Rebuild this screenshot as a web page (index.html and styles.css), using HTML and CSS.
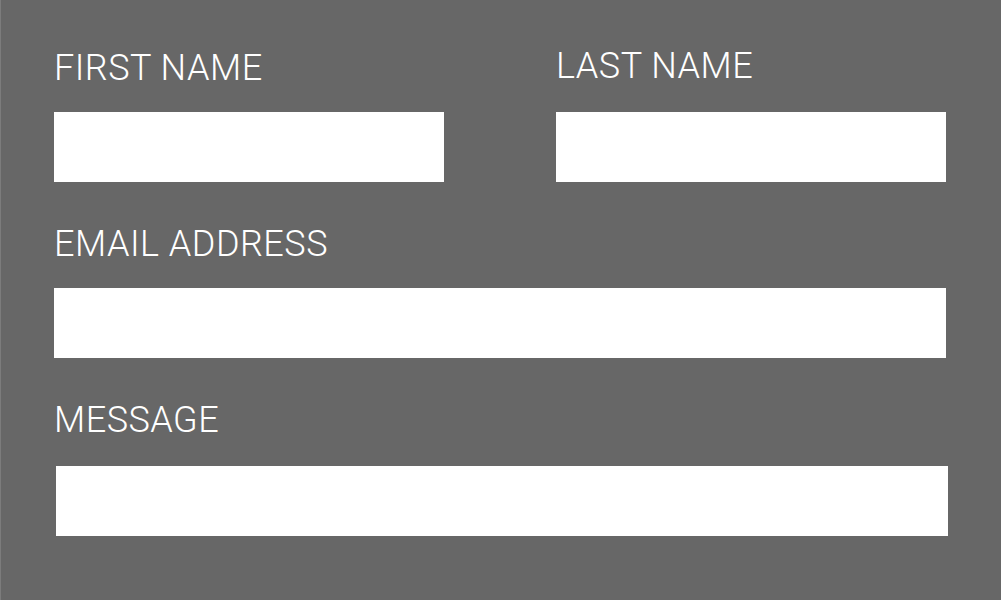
FILE: index.html
```html
<!DOCTYPE html>
<html lang="en">
<head>
<meta charset="utf-8">
<title>Contact form</title>
<link rel="stylesheet" href="styles.css">
</head>
<body>
<form class="form">
  <div class="row two">
    <div class="field">
      <label class="label" for="first">FIRST NAME</label>
      <input class="input" id="first" type="text">
    </div>
    <div class="field last">
      <label class="label" for="last">LAST NAME</label>
      <input class="input" id="last" type="text">
    </div>
  </div>
  <div class="field">
    <label class="label" for="email">EMAIL ADDRESS</label>
    <input class="input" id="email" type="email">
  </div>
  <div class="field message">
    <label class="label" for="msg">MESSAGE</label>
    <textarea class="input area" id="msg"></textarea>
  </div>
</form>
</body>
</html>
```
FILE: styles.css
```css
html, body {
  margin: 0;
  padding: 0;
  height: 100%;
}
body {
  background: #676767;
  border-left: 1px solid #7c7c7c;
  box-sizing: border-box;
  font-family: Roboto, "Liberation Sans", sans-serif;
  overflow: hidden;
}
.form {
  padding: 47px 0 0 53px;
  width: 892px;
  display: flex;
  flex-direction: column;
  gap: 41px;
}
.row.two {
  display: grid;
  grid-template-columns: 390px 390px;
  column-gap: 112px;
}
.field {
  display: flex;
  flex-direction: column;
}
.label {
  color: #fff;
  font-size: 36px;
  line-height: 42px;
  font-weight: 300;
  letter-spacing: 0.5px;
  margin-bottom: 23px;
}
.last .label {
  margin-top: -2px;
  margin-bottom: 25px;
}
.input {
  display: block;
  box-sizing: border-box;
  width: 100%;
  height: 70px;
  border: 0;
  margin: 0;
  padding: 0 12px;
  background: #fff;
  font-family: inherit;
  font-size: 20px;
  outline: none;
}
.message .label {
  margin-bottom: 25px;
}
.area {
  resize: none;
  margin-left: 2px;
}
```
